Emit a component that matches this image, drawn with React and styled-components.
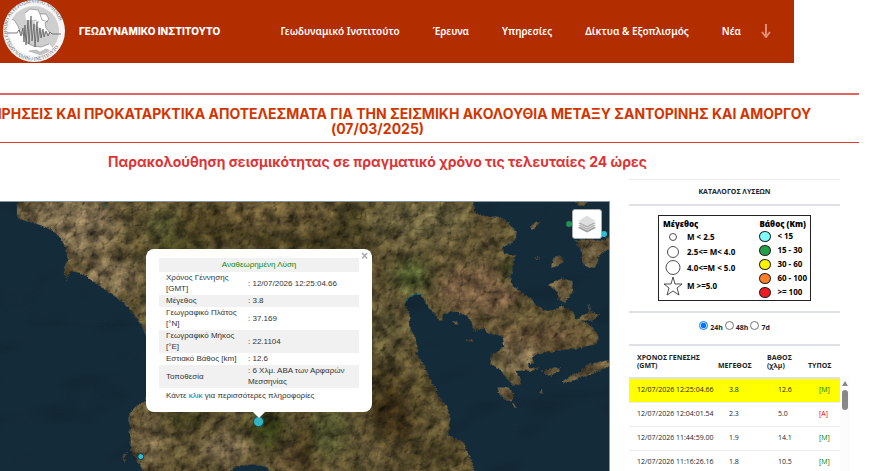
import styled, { createGlobalStyle } from "styled-components";

const GlobalStyle = createGlobalStyle`
*{
    margin: 0;
    padding: 0;
    box-sizing: border-box;
}
html, body{
    background: #fff;
    overflow: hidden;
    font-family: "Open Sans", "Noto Sans", sans-serif;
    color: #212529;
}
`

const menu = ["Γεωδυναμικό Ινστιτούτο", "Έρευνα", "Υπηρεσίες", "Δίκτυα & Εξοπλισμός", "Νέα"];

const sizes = [
    { shape: 7, label: "M < 2.5" },
    { shape: 11, label: "2.5<= M< 4.0" },
    { shape: 14, label: "4.0<=M < 5.0" },
    { shape: "star", label: "M >=5.0" },
];

const depths = [
    { color: "#80ffff", label: "< 15" },
    { color: "#22a045", label: "15 - 30" },
    { color: "#fff200", label: "30 - 60" },
    { color: "#ff7f27", label: "60 - 100" },
    { color: "#ed1c24", label: ">= 100" },
];

const quakes = [
    { time: "12/07/2026 12:25:04.66", mag: "3.8", depth: "12.6", type: "[M]" },
    { time: "12/07/2026 12:04:01.54", mag: "2.3", depth: "5.0", type: "[A]" },
    { time: "12/07/2026 11:44:59.00", mag: "1.9", depth: "14.1", type: "[M]" },
    { time: "12/07/2026 11:16:26.16", mag: "1.8", depth: "10.5", type: "[M]" },
];

const details = [
    ["Χρόνος Γέννησης [GMT]", ": 12/07/2026 12:25:04.66"],
    ["Μέγεθος", ": 3.8"],
    ["Γεωγραφικό Πλάτος [°N]", ": 37.169"],
    ["Γεωγραφικό Μήκος [°E]", ": 22.1104"],
    ["Εστιακό Βάθος [km]", ": 12.6"],
    ["Τοποθεσία", ": 6 Χλμ. ΑΒΑ των Αρφαρών Μεσσηνίας"],
];

const mainland =
    "M17 195 L17 216 C20 220 40 221 55 231 C62 238 66 246 66 250 L68 258 65 265 64 272 67 279 69 274 70 271 C84 270 90 279 95 282 C110 292 120 298 130 309 C138 318 142 326 146 334 L152 350 154 380 145 401 C135 404 128 412 129 420 L130 431 131 445 133 455 140 463 146 475 L226 475 C232 465 250 461 268 467 L271 475 L476 475 474 466 470 456 465 443 455 437 449 435 451 418 448 406 441 398 432 380 424 363 416 352 419 350 416 337 410 326 411 316 406 304 C408 296 416 292 422 294 L426 301 433 311 440 318 445 313 456 311 468 315 472 322 475 331 486 326 487 332 503 335 505 344 500 350 492 354 491 363 500 368 508 378 515 385 522 384 521 377 516 370 532 370 540 368 529 366 529 362 535 363 533 357 538 353 548 351 565 349 580 347 595 344 600 338 597 331 590 323 577 318 575 314 570 308 562 305 556 309 545 310 540 306 530 297 520 290 512 284 511 276 516 255 505 252 503 246 512 243 517 237 516 230 508 220 500 216 485 215 476 212 473 195 Z";

const islands = [
    "M549 284 L562 278 573 280 574 290 566 302 560 299 558 291 Z",
    "M575 240 L590 238 600 240 612 235 612 247 601 253 597 266 590 267 583 262 583 250 Z",
    "M552 266 L554 258 560 254 565 260 556 267 Z",
    "M577 320 L583 314 589 313 590 303 592 311 600 314 597 319 587 320 Z",
    "M563 381 L571 375 580 371 590 363 612 359 612 365 595 372 580 378 567 382 Z",
    "M543 370 L555 367 561 367 560 371 550 375 Z",
    "M498 387 L510 387 515 394 512 400 506 399 500 393 Z",
    "M512 402 L515 403 518 407 515 406 Z",
    "M466 339 L473 338 474 341 467 341 Z",
    "M453 321 L458 321 459 324 455 324 Z",
    "M438 317 L443 316 444 320 440 320 Z",
    "M531 226 L535 222 540 221 538 225 534 229 Z",
    "M536 258 L540 256 540 259 Z",
    "M541 389 L543 389 543 393 541 393 Z",
    "M577 200 L590 200 585 205 579 204 Z",
    "M124 454 L127 452 125 462 122 457 Z",
];

const regions = [
    [70, 225, 50, 30, "#7c6c4e"],
    [110, 275, 30, 20, "#7a6b4b"],
    [165, 225, 22, 14, "#57562f"],
    [215, 222, 40, 18, "#4d4322"],
    [180, 248, 30, 10, "#3f3c1c"],
    [280, 212, 60, 12, "#6a5a35"],
    [300, 240, 70, 10, "#41381a"],
    [350, 222, 20, 16, "#4a4221"],
    [420, 220, 50, 22, "#675f3b"],
    [412, 275, 18, 18, "#4d562c"],
    [480, 290, 40, 25, "#745b40"],
    [540, 335, 50, 12, "#6b5439"],
    [510, 272, 9, 12, "#424c22"],
    [518, 358, 25, 14, "#77684a"],
    [385, 330, 18, 30, "#5c5230"],
    [385, 395, 18, 40, "#43371a"],
    [330, 430, 18, 26, "#55562e"],
    [398, 415, 20, 28, "#3a2f15"],
    [306, 445, 8, 30, "#3a2e14"],
    [430, 455, 36, 18, "#4f4525"],
    [418, 395, 12, 26, "#594d2c"],
    [148, 440, 16, 28, "#6e5e40"],
    [185, 418, 26, 8, "#3d3b1b"],
    [268, 428, 18, 20, "#363a19"],
    [225, 448, 24, 14, "#76664a"],
    [290, 460, 10, 14, "#5e4d2d"],
];

function Terrain(){
    return(
        <svg viewBox="0 201 610 270" preserveAspectRatio="xMinYMin slice" role="img" aria-label="Χάρτης">
            <defs>
                <filter id="relief" filterUnits="userSpaceOnUse" x="0" y="190" width="620" height="290" colorInterpolationFilters="sRGB">
                    <feTurbulence type="fractalNoise" baseFrequency="0.2" numOctaves="3" seed="3" result="edges" />
                    <feDisplacementMap in="SourceGraphic" in2="edges" scale="3" xChannelSelector="R" yChannelSelector="G" result="land" />
                    <feTurbulence type="fractalNoise" baseFrequency="0.08" numOctaves="6" seed="21" result="patches" />
                    <feColorMatrix in="patches" type="matrix" values="1 0 0 0 0  1 0 0 0 0  1 0 0 0 0  0 0 0 0 1" result="grey" />
                    <feComposite in="land" in2="grey" operator="arithmetic" k1="1.4" k2="0.3" k3="0" k4="0" result="mottled" />
                    <feTurbulence type="fractalNoise" baseFrequency="0.12" numOctaves="4" seed="12" result="noise" />
                    <feColorMatrix in="noise" type="matrix" values="0 0 0 0 0  0 0 0 0 0  0 0 0 0 0  1 0 0 0 0" result="height" />
                    <feDiffuseLighting in="height" surfaceScale="2" diffuseConstant="1.2" lightingColor="#fff" result="light">
                        <feDistantLight azimuth="225" elevation="58" />
                    </feDiffuseLighting>
                    <feBlend in="light" in2="mottled" mode="multiply" result="shaded" />
                    <feComposite in="shaded" in2="land" operator="in" />
                </filter>
                <filter id="seabed" filterUnits="userSpaceOnUse" x="0" y="190" width="620" height="290" colorInterpolationFilters="sRGB">
                    <feTurbulence type="fractalNoise" baseFrequency="0.012 0.02" numOctaves="2" seed="5" result="noise" />
                    <feColorMatrix in="noise" type="matrix" values="0 0 0 0 0  0 0 0 0 0  0 0 0 0 0  1 0 0 0 0" result="height" />
                    <feDiffuseLighting in="height" surfaceScale="5" diffuseConstant="1.2" lightingColor="#fff" result="light">
                        <feDistantLight azimuth="225" elevation="58" />
                    </feDiffuseLighting>
                    <feBlend in="light" in2="SourceGraphic" mode="multiply" />
                </filter>
                <filter id="soft" x="-50%" y="-50%" width="200%" height="200%">
                    <feGaussianBlur stdDeviation="7" />
                </filter>
                <clipPath id="coast">
                    <path d={mainland} />
                </clipPath>
            </defs>
            <rect y="195" width="620" height="285" fill="#142b39" filter="url(#seabed)" />
            <g filter="url(#relief)">
                <path d={mainland} fill="#5f5332" />
                <g clipPath="url(#coast)">
                    <g filter="url(#soft)">
                        {regions.map(([cx, cy, rx, ry, fill]) => (
                            <ellipse key={`${cx}-${cy}`} cx={cx} cy={cy} rx={rx} ry={ry} fill={fill} />
                        ))}
                    </g>
                </g>
                {islands.map((d) => (
                    <path key={d} d={d} fill="#66583b" />
                ))}
            </g>
            <path d="M407 300 C410 294 418 292 423 294 M103 202 L107 207" fill="none" stroke="#17616a" />
            <circle cx="259" cy="421" r="5" fill="#31b4c4" stroke="#1c4a50" />
            <circle cx="141" cy="456" r="3" fill="#2bbfd3" stroke="#17343b" />
            <circle cx="605" cy="233" r="3" fill="#2bbfd3" />
            <circle cx="570" cy="223" r="3" fill="#1f9352" />
        </svg>
    )
}

function Emblem(){
    return(
        <svg viewBox="0 0 62 62" width="62" height="62" aria-hidden="true">
            <defs>
                <path id="upper" d="M5 37 A27 27 0 1 1 57 37" />
                <path id="lower" d="M3 39 A29 29 0 0 0 59 39" />
                <clipPath id="disc"><circle cx="31" cy="31" r="25" /></clipPath>
            </defs>
            <circle cx="31" cy="31" r="31" fill="#f6f6f6" />
            <g clipPath="url(#disc)">
                <rect width="62" height="62" fill="#cfcfcf" />
                <path d="M2 18 L11 20 15 26 17 32 22 36 24 43 30 46 38 47 46 44 50 48 44 60 8 60 2 40Z" fill="#fff" />
                <path d="M22 13 L27 9 35 10 37 14 43 14 46 19 42 23 43 28 47 33 40 32 37 28 33 26 31 20 23 20Z" fill="#fff" />
                <path d="M26 51 L33 50 37 52 43 49 48 51 38 55Z" fill="#c4c4c4" stroke="#999" strokeWidth="0.5" />
                <path d="M2 18 L11 20 15 26 17 32 22 36 24 43 30 46 38 47 46 44 M22 13 L27 9 35 10 37 14 43 14 46 19 42 23 43 28 47 33 M37 14 L39 20 45 22 M31 20 L36 22" fill="none" stroke="#777" strokeWidth="0.6" />
            </g>
            <path d="M4 33 H14 L16 30 18 36 20 28 21 42 22 25 23 45 25 20 26 44 28 16 29 41 31 24 32 47 34 22 35 42 37 28 38 38 40 29 41 37 43 31 45 36 47 32 49 34 H58" fill="none" stroke="#5c5c5c" strokeWidth="0.8" />
            <Ring><textPath href="#upper">ΕΘΝΙΚΟ ΑΣΤΕΡΟΣΚΟΠΕΙΟ ΑΘΗΝΩΝ</textPath></Ring>
            <Ring><textPath href="#lower">ΓΕΩΔΥΝΑΜΙΚΟ ΙΝΣΤΙΤΟΥΤΟ</textPath></Ring>
        </svg>
    )
}

function LayersIcon(){
    return(
        <svg viewBox="0 0 26 26" width="20" height="20" aria-hidden="true">
            <path d="M1 18 L13 12 25 18 13 24Z" fill="#a0a0a0" />
            <path d="M1 15 L13 9 25 15 13 21Z" fill="#b5b5b5" stroke="#fff" strokeWidth="0.6" />
            <path d="M1 12 L13 6 25 12 13 18Z" fill="#adadad" stroke="#fff" strokeWidth="0.6" />
            <path d="M1 9 L13 2 25 9 13 15Z" fill="#dedede" stroke="#fff" strokeWidth="0.6" />
        </svg>
    )
}

function SizeMark({ shape }){
    if (shape === "star") {
        return(
            <svg width="20" height="20" viewBox="0 0 20 20" aria-hidden="true">
                <path d="M10 1 L12 8 19 8 14 12 16 19 10 15 4 19 6 12 1 8 8 8Z" fill="none" stroke="#222" strokeWidth="0.8" />
            </svg>
        )
    }
    return(
        <svg width="20" height={shape + 1} viewBox={`-10 ${-(shape + 1) / 2} 20 ${shape + 1}`} aria-hidden="true">
            <circle r={shape / 2} fill="none" stroke="#222" strokeWidth="0.8" />
        </svg>
    )
}

export default function App(){
    return(
        <Page>
            <GlobalStyle />
            <Header>
                <Brand href="#home"><Emblem />ΓΕΩΔΥΝΑΜΙΚΟ ΙΝΣΤΙΤΟΥΤΟ</Brand>
                <Menu>
                    {menu.map((item) => (
                        <MenuLink key={item} href="#menu">{item}</MenuLink>
                    ))}
                </Menu>
                <More aria-label="Περισσότερα">
                    <svg width="10" height="14" viewBox="0 0 10 14" aria-hidden="true">
                        <path d="M5 0 V12 M1 8 L5 13 9 8" fill="none" stroke="#e08c72" strokeWidth="2" />
                    </svg>
                </More>
            </Header>
            <Announcement>
                <Notice>ΠΑΡΑΤΗΡΗΣΕΙΣ ΚΑΙ ΠΡΟΚΑΤΑΡΚΤΙΚΑ ΑΠΟΤΕΛΕΣΜΑΤΑ ΓΙΑ ΤΗΝ ΣΕΙΣΜΙΚΗ ΑΚΟΛΟΥΘΙΑ ΜΕΤΑΞΥ ΣΑΝΤΟΡΙΝΗΣ ΚΑΙ ΑΜΟΡΓΟΥ (07/03/2025)</Notice>
                <Subtitle>Παρακολούθηση σεισμικότητας σε πραγματικό χρόνο τις τελευταίες 24 ώρες</Subtitle>
            </Announcement>
            <Content>
                <MapPanel>
                    <Terrain />
                    <LayersButton aria-label="Επίπεδα"><LayersIcon /></LayersButton>
                    <Popup>
                        <Close aria-label="Κλείσιμο">×</Close>
                        <Details>
                            <tbody>
                                <tr><Solution colSpan="2">Αναθεωρημένη Λύση</Solution></tr>
                                {details.map(([name, value]) => (
                                    <tr key={name}>
                                        <th scope="row">{name}</th>
                                        <td>{value}</td>
                                    </tr>
                                ))}
                                <tr><MoreInfo colSpan="2">Κάντε <a href="#details">κλικ</a> για περισσότερες πληροφορίες</MoreInfo></tr>
                            </tbody>
                        </Details>
                    </Popup>
                </MapPanel>
                <Sidebar>
                    <Catalogue>ΚΑΤΑΛΟΓΟΣ ΛΥΣΕΩΝ</Catalogue>
                    <LegendArea>
                        <Legend>
                            <LegendColumn $gap={1}>
                                <LegendTitle>Μέγεθος</LegendTitle>
                                {sizes.map((s) => (
                                    <LegendItem key={s.label}><SizeMark shape={s.shape} />{s.label}</LegendItem>
                                ))}
                            </LegendColumn>
                            <LegendColumn $gap={0}>
                                <LegendTitle>Βάθος (Km)</LegendTitle>
                                {depths.map((d) => (
                                    <LegendItem key={d.label}><Dot $color={d.color} />{d.label}</LegendItem>
                                ))}
                            </LegendColumn>
                        </Legend>
                    </LegendArea>
                    <Periods>
                        {["24h", "48h", "7d"].map((p) => (
                            <label key={p}><input type="radio" name="period" defaultChecked={p === "24h"} />{p}</label>
                        ))}
                    </Periods>
                    <ListArea>
                        <Quakes>
                            <colgroup>
                                <Column $width={89} />
                                <Column $width={49} />
                                <Column $width={41} />
                                <Column $width={32} />
                            </colgroup>
                            <thead>
                                <tr>
                                    <th>ΧΡΟΝΟΣ ΓΕΝΕΣΗΣ (GMT)</th>
                                    <th>ΜΕΓΕΘΟΣ</th>
                                    <th>ΒΑΘΟΣ (χλμ)</th>
                                    <th>ΤΥΠΟΣ</th>
                                </tr>
                            </thead>
                            <tbody>
                                {quakes.map((q, i) => (
                                    <Quake key={q.time} $active={i === 0}>
                                        <td>{q.time}</td>
                                        <td>{q.mag}</td>
                                        <td>{q.depth}</td>
                                        <Type $auto={q.type === "[A]"}>{q.type}</Type>
                                    </Quake>
                                ))}
                            </tbody>
                        </Quakes>
                        <Scrollbar />
                    </ListArea>
                </Sidebar>
            </Content>
        </Page>
    )
}

const Page = styled.div`
    display: flex;
    flex-direction: column;
    height: 100vh;
    overflow: hidden;
`
const Header = styled.header`
    display: flex;
    align-items: center;
    margin-right: 86px;
    padding: 0 23px 1px 3px;
    background: #b22d00;
`
const Brand = styled.a`
    display: flex;
    align-items: center;
    gap: 14px;
    flex: 1;
    color: #fff;
    font: 800 10px Inter, "Open Sans", sans-serif;
    text-decoration: none;
    white-space: nowrap;
`
const Ring = styled.text`
    font: 5px "Liberation Serif", serif;
    fill: #666;
`
const Menu = styled.nav`
    display: flex;
    gap: 33px;
`
const MenuLink = styled.a`
    color: #fff;
    font: 600 10px "Noto Sans", sans-serif;
    text-decoration: none;
    white-space: nowrap;
`
const More = styled.button`
    display: flex;
    margin-left: 20px;
    border: 0;
    background: none;
`
const Announcement = styled.section`
    margin: 30px 21px 0 -104px;
    text-align: center;
`
const Notice = styled.h1`
    padding: 11px 24px 6px;
    border-top: 2px solid #e06666;
    border-bottom: 1px solid #dc3a2c;
    color: #d23600;
    font: bold 14px/15px Inter, "DejaVu Sans", sans-serif;
`
const Subtitle = styled.h2`
    padding: 10px 0 8px;
    color: #dc3535;
    font: bold 14px/18px Inter, "DejaVu Sans", sans-serif;
`
const Content = styled.main`
    display: flex;
    gap: 19px;
    flex: 1;
    min-height: 0;
    padding-right: 30px;
`
const MapPanel = styled.section`
    position: relative;
    flex: 1;
    margin-top: 22px;
    overflow: hidden;
    border-top: 1px solid #87949a;
    border-right: 1px solid #87949a;
    background: #142c39;
    > svg{
        display: block;
        width: 100%;
        height: 100%;
    }
`
const LayersButton = styled.button`
    position: absolute;
    top: 7px;
    right: 7px;
    display: grid;
    place-items: center;
    width: 30px;
    height: 30px;
    border: 1px solid #aaa;
    border-radius: 3px;
    background: #fff;
`
const Popup = styled.div`
    position: absolute;
    top: 47px;
    left: 146px;
    width: 226px;
    padding: 9px 13px;
    border-radius: 8px;
    background: #fff;
    &::after{
        content: "";
        position: absolute;
        bottom: -6px;
        left: 106px;
        border: 7px solid transparent;
        border-top-color: #fff;
        border-bottom: 0;
    }
`
const Close = styled.button`
    position: absolute;
    top: 1px;
    right: 4px;
    border: 0;
    background: none;
    color: #aaa;
    font: bold 12px/12px "Liberation Sans", sans-serif;
`
const Details = styled.table`
    width: 100%;
    border-collapse: collapse;
    color: #333;
    font: 8px/11px "Liberation Sans", sans-serif;
    tr:nth-child(odd){
        background: #f1f1f1;
    }
    th{
        width: 82px;
        padding: 0 0 1px 7px;
        font-weight: normal;
        text-align: left;
    }
    td{
        padding: 0 7px 1px;
    }
    a{
        color: #0078a8;
        text-decoration: none;
    }
`
const Solution = styled.th`
    && {
        padding: 1px 0 2px;
        color: #0a8a0a;
        text-align: center;
    }
`
const MoreInfo = styled.td`
    && {
        padding: 2px 7px;
    }
`
const Sidebar = styled.aside`
    display: flex;
    flex-direction: column;
    width: 221px;
    font-size: 7px;
    line-height: 8px;
`
const Catalogue = styled.h3`
    margin-right: 10px;
    padding: 8px 0;
    border-top: 1px solid #e9ecef;
    border-bottom: 2px solid #dee2e6;
    font-size: 7px;
    line-height: 8px;
    text-align: center;
`
const LegendArea = styled.div`
    margin-right: 10px;
    padding: 9px 29px 10px;
    border-bottom: 2px solid #dee2e6;
`
const Legend = styled.div`
    display: flex;
    justify-content: space-between;
    padding: 3px 3px 1px 4px;
    border: 1px solid #222;
    color: #000;
    font: bold 8px/10px "Noto Sans", sans-serif;
`
const LegendColumn = styled.div`
    display: flex;
    flex-direction: column;
    gap: ${(props) => props.$gap}px;
`
const LegendTitle = styled.strong`
    white-space: nowrap;
`
const LegendItem = styled.div`
    display: flex;
    align-items: center;
    gap: 4px;
    min-height: 14px;
    white-space: nowrap;
`
const Dot = styled.span`
    width: 12px;
    height: 11px;
    margin-right: 2px;
    border: 1px solid #222;
    border-radius: 50%;
    background: ${(props) => props.$color};
`
const Periods = styled.div`
    display: flex;
    justify-content: center;
    gap: 2px;
    margin-right: 10px;
    padding: 8px 0 12px;
    border-bottom: 2px solid #dee2e6;
    font-weight: bold;
    label{
        display: flex;
        align-items: end;
        gap: 2px;
    }
    input{
        width: 9px;
        height: 9px;
        margin-bottom: 2px;
    }
`
const ListArea = styled.div`
    display: flex;
    flex: 1;
    min-height: 0;
    overflow: hidden;
`
const Quakes = styled.table`
    flex: 1;
    align-self: flex-start;
    table-layout: fixed;
    border-collapse: collapse;
    th{
        height: 32px;
        padding-bottom: 7px;
        border-bottom: 2px solid #dee2e6;
        text-align: left;
        vertical-align: bottom;
    }
    th:first-child, td:first-child{
        padding-left: 8px;
    }
`
const Column = styled.col`
    width: ${(props) => props.$width}px;
`
const Quake = styled.tr`
    height: 24px;
    border-bottom: 1px solid #e9ecef;
    background: ${(props) => (props.$active ? "#ff0" : "#fff")};
    td{
        padding-left: 11px;
        white-space: nowrap;
    }
`
const Type = styled.td`
    color: ${(props) => (props.$auto ? "#f00" : "#008000")};
`
const Scrollbar = styled.div`
    width: 10px;
    margin-top: 32px;
    padding: 3px 2px;
    background: #fcfcfc;
    &::before{
        content: "";
        display: block;
        margin-bottom: 4px;
        border: 3px solid transparent;
        border-top: 0;
        border-bottom: 5px solid #888;
    }
    &::after{
        content: "";
        display: block;
        height: 20px;
        border-radius: 3px;
        background: #888;
    }
`
